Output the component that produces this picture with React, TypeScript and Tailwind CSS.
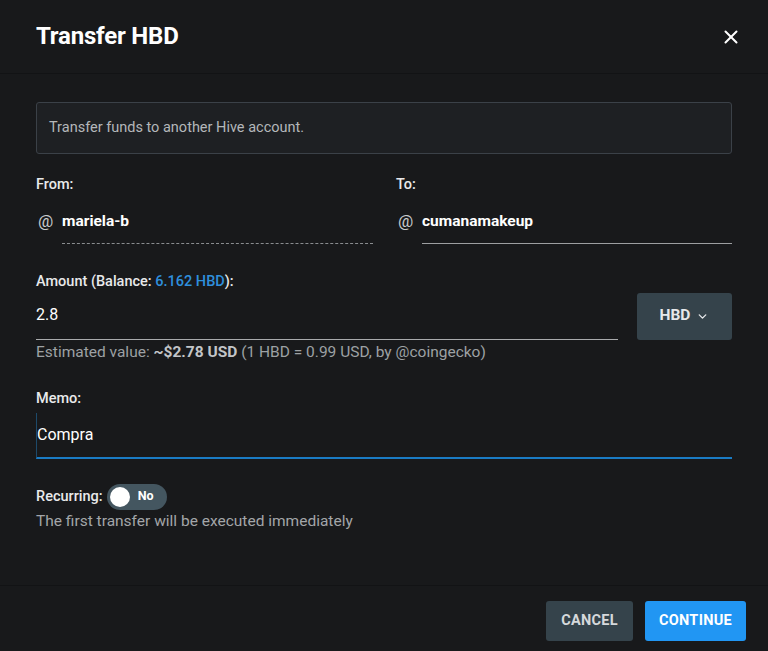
import { X, ChevronDown } from "lucide-react";

export default function App() {
  return (
    <div
      className="w-[768px] h-[651px] bg-[#18191b] text-white flex flex-col overflow-hidden"
      style={{ fontFamily: "Roboto, 'Liberation Sans', sans-serif" }}
    >
      {/* Header */}
      <div className="h-[74px] flex items-center justify-between pl-9 pr-[26px] border-b border-[#121315]">
        <h2 className="text-[24px] font-bold tracking-[-0.2px] pb-[1px]">Transfer HBD</h2>
        <X className="w-[22px] h-[22px] text-white" strokeWidth={2.2} />
      </div>

      {/* Body */}
      <div className="flex-1 px-9 pt-7">
        <div className="h-[52px] border border-[#3b4148] bg-[#1e2023] rounded-[3px] flex items-center px-3">
          <p className="text-[14.5px] text-[#b4b7ba]">Transfer funds to another Hive account.</p>
        </div>

        {/* From / To */}
        <div className="grid grid-cols-2 gap-6 mt-[23px]">
          <div>
            <label className="block text-[14.5px] font-medium text-[#e9eaeb] leading-4">From:</label>
            <div className="flex items-center mt-[16px]">
              <span className="text-[17px] text-[#c9cbcd] w-[26px] pl-[2px]">@</span>
              <span className="text-[15.5px] font-bold">mariela-b</span>
            </div>
            <div className="ml-[26px] mt-[8px] border-b border-dashed border-[#8a8d90] w-[311px]" />
          </div>
          <div>
            <label className="block text-[14.5px] font-medium text-[#e9eaeb] leading-4">To:</label>
            <div className="flex items-center mt-[16px]">
              <span className="text-[17px] text-[#c9cbcd] w-[26px] pl-[2px]">@</span>
              <span className="text-[15.5px] font-bold">cumanamakeup</span>
            </div>
            <div className="ml-[26px] mt-[8px] border-b border-[#9d9fa1]" />
          </div>
        </div>

        {/* Amount */}
        <div className="mt-[30px]">
          <label className="block text-[14.5px] font-medium text-[#e9eaeb] leading-4">
            Amount (Balance: <span className="text-[#2f8fdc]">6.162 HBD</span>):
          </label>
          <div className="flex items-end gap-[19px] mt-[3px]">
            <div className="flex-1 h-[46px] flex items-center border-b border-[#a9abad] pb-[2px]">
              <span className="text-[16px]">2.8</span>
            </div>
            <button className="w-[95px] h-[47px] bg-[#35434b] rounded-[3px] flex items-center justify-center gap-[6px] text-[15.5px] font-bold text-[#e6e8ea]">
              HBD <ChevronDown className="w-[13px] h-[13px]" strokeWidth={2.5} />
            </button>
          </div>
          <p className="text-[15.5px] text-[#9da1a4] mt-[1px]">
            Estimated value: <span className="font-bold text-[#c2c5c8]">~$2.78 USD</span> (1 HBD = 0.99 USD, by @coingecko)
          </p>
        </div>

        {/* Memo */}
        <div className="mt-[27px]">
          <label className="block text-[14.5px] font-medium text-[#e9eaeb] leading-4">Memo:</label>
          <div className="mt-[6px] h-[46px] border-l border-[#1d4a6b] border-b-2 border-b-[#1a7bc4] flex items-center">
            <span className="text-[16px]">Compra</span>
          </div>
        </div>

        {/* Recurring */}
        <div className="mt-[25px]">
          <div className="flex items-center gap-[4px]">
            <span className="text-[14.5px] font-medium text-[#e9eaeb]">Recurring:</span>
            <div className="w-[60px] h-[26px] rounded-full bg-[#445660] flex items-center pl-[3px] pr-[13px] justify-between">
              <div className="w-[20px] h-[20px] rounded-full bg-white" />
              <span className="text-[12.5px] font-bold">No</span>
            </div>
          </div>
          <p className="text-[15.5px] text-[#a3a6a9]">The first transfer will be executed immediately</p>
        </div>
      </div>

      {/* Footer */}
      <div className="h-[66px] border-t border-[#121315] flex items-start justify-end gap-3 pr-[22px] pt-[15px]">
        <button className="w-[87px] h-[40px] bg-[#35434b] rounded-[3px] text-[14.5px] font-bold text-[#d6d9db] tracking-[0.3px]">
          CANCEL
        </button>
        <button className="w-[101px] h-[40px] bg-[#2196f3] rounded-[3px] text-[14.5px] font-bold text-white tracking-[0.3px]">
          CONTINUE
        </button>
      </div>
    </div>
  );
}
